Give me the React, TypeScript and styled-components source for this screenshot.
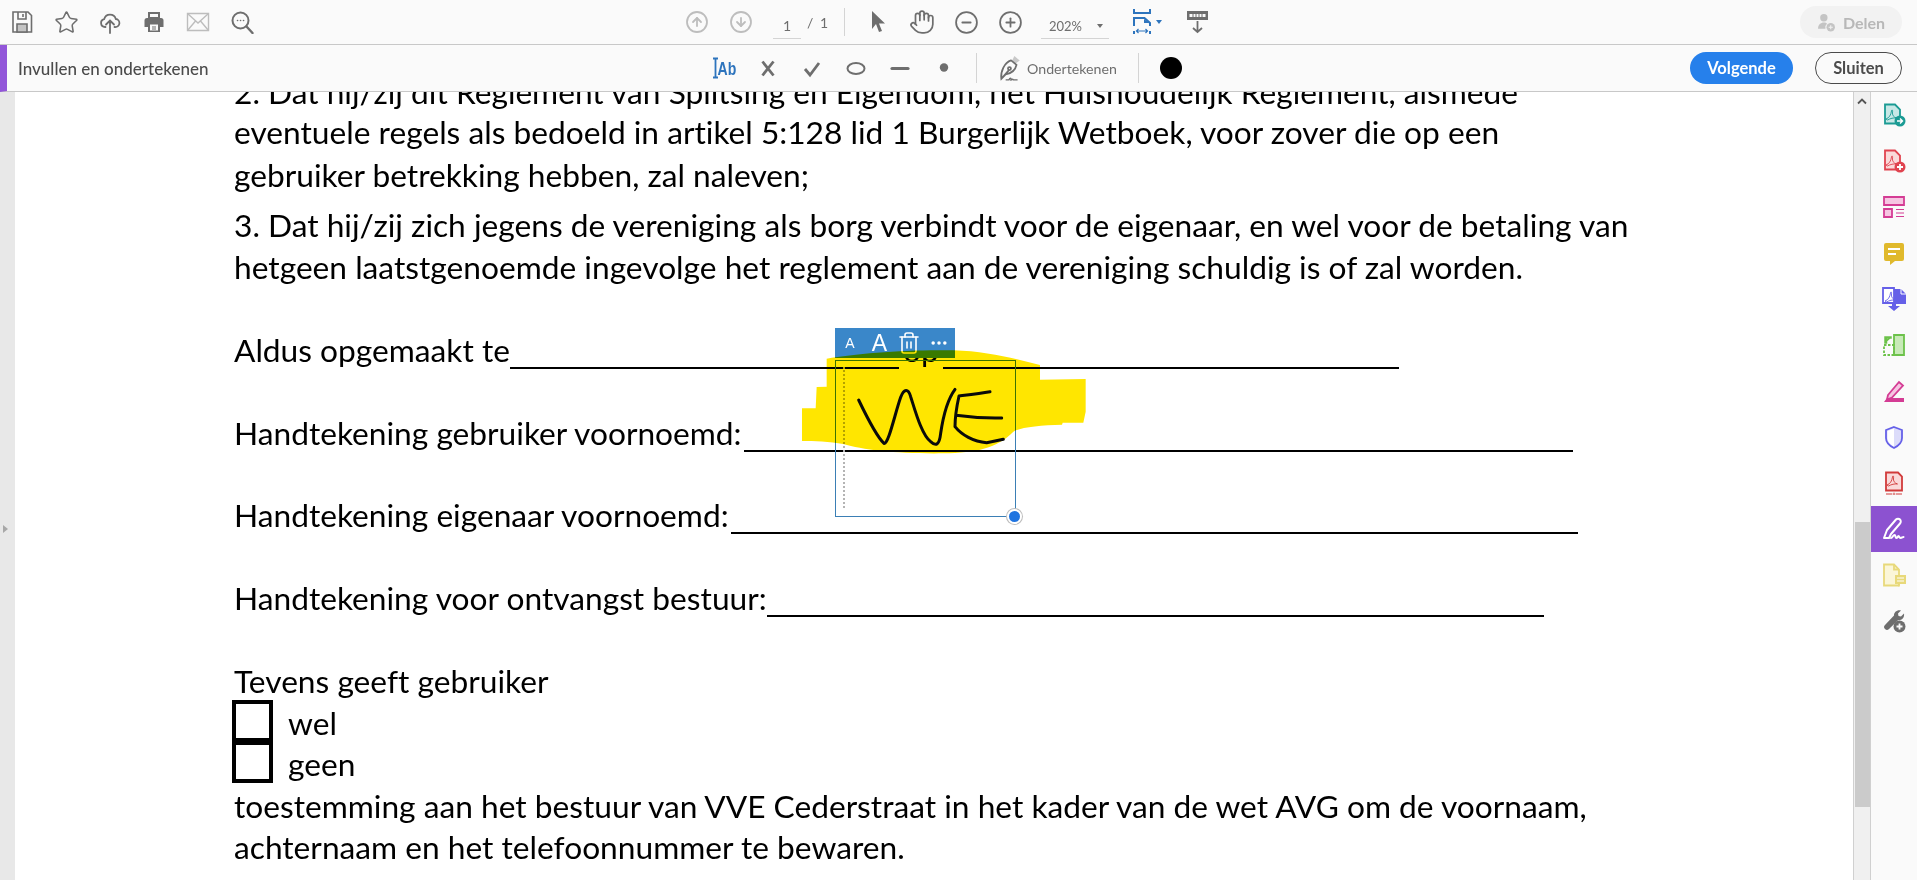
import React from 'react';
import styled, { createGlobalStyle } from 'styled-components';
import { CircleArrowDown, CircleArrowUp, CircleMinus, CirclePlus, Ellipsis, Hand, Star, Trash2 } from 'lucide-react';

const GlobalStyle = createGlobalStyle`
   html, body {
      margin: 0;
      padding: 0;
      height: 100%;
      overflow: hidden;
      background: #fff;
   }
`;

const Root = styled.div`
   display: flex;
   flex-direction: column;
   width: 1917px;
   height: 880px;
   overflow: hidden;
   font-family: 'Lato', 'Liberation Sans', sans-serif;
`;

const TopBar = styled.div`
   display: flex;
   align-items: center;
   flex: 0 0 45px;
   box-sizing: border-box;
   background: #fafafa;
   border-bottom: 1px solid #c8c8c8;
`;

const ToolGroup = styled.div<{ $width?: number }>`
   display: flex;
   align-items: center;
   flex: 0 0 ${(p) => (p.$width ? `${p.$width}px` : 'auto')};
`;

const Slot = styled.div<{ $w?: number; $ml?: number; $faded?: boolean }>`
   display: flex;
   align-items: center;
   justify-content: center;
   flex: 0 0 ${(p) => p.$w ?? 44}px;
   height: 30px;
   margin-left: ${(p) => p.$ml ?? 0}px;
   color: ${(p) => (p.$faded ? '#bdbdbd' : '#6e6e6e')};
`;

const PageField = styled.div`
   flex: 0 0 28px;
   margin-left: 10px;
   height: 33px;
   line-height: 40px;
   box-sizing: border-box;
   border-bottom: 1px solid #d4d4d4;
   text-align: center;
   font-size: 14px;
   color: #6e6e6e;
`;

const PageTotal = styled.div`
   flex: 0 0 43px;
   padding-left: 6px;
   box-sizing: border-box;
   font-size: 14px;
   word-spacing: 3px;
   color: #6e6e6e;
`;

const Divider = styled.div<{ $h?: number; $ml?: number; $mr?: number }>`
   flex: 0 0 1px;
   height: ${(p) => p.$h ?? 28}px;
   margin: 0 ${(p) => p.$mr ?? 0}px 0 ${(p) => p.$ml ?? 0}px;
   background: #d4d4d4;
`;

const ZoomField = styled.div`
   display: flex;
   align-items: center;
   flex: 0 0 68px;
   height: 33px;
   margin-left: 9px;
   box-sizing: border-box;
   border-bottom: 1px solid #d4d4d4;
   padding: 8px 0 0 8px;
   font-size: 13px;
   color: #6e6e6e;
`;

const Caret = styled.span<{ $color?: string; $ml?: number }>`
   display: inline-block;
   width: 0;
   height: 0;
   margin-left: ${(p) => p.$ml ?? 15}px;
   border-left: 3.5px solid transparent;
   border-right: 3.5px solid transparent;
   border-top: 4px solid ${(p) => p.$color ?? '#6e6e6e'};
`;

const ShareButton = styled.div`
   display: flex;
   align-items: center;
   justify-content: center;
   gap: 7px;
   flex: 0 0 102px;
   height: 32px;
   margin-left: auto;
   margin-right: 15px;
   border-radius: 16px;
   background: #f2f2f2;
   color: #b8b8b8;
   font-size: 16px;
   font-weight: 700;
`;

const FormBar = styled.div`
   display: flex;
   align-items: center;
   flex: 0 0 47px;
   box-sizing: border-box;
   background: #fafafa;
   border-bottom: 1px solid #c8c8c8;
   border-left: 7px solid #9256d9;
`;

const FormTitle = styled.div`
   flex: 0 0 695px;
   padding-left: 11px;
   box-sizing: border-box;
   font-size: 17px;
   font-weight: 500;
   color: #4b4b4b;
   white-space: nowrap;
`;

const SignLabel = styled.span`
   flex: 0 0 90px;
   margin-left: 4px;
   font-size: 14.2px;
   color: #6e6e6e;
   white-space: nowrap;
`;

const ColorDot = styled.div`
   width: 22px;
   height: 22px;
   margin-left: 21px;
   border-radius: 50%;
   background: #000;
`;

const PillButton = styled.div<{ $primary?: boolean }>`
   display: flex;
   align-items: center;
   justify-content: center;
   box-sizing: border-box;
   height: 32px;
   border-radius: 16px;
   font-size: 16.5px;
   font-weight: 700;
   color: ${(p) => (p.$primary ? '#fff' : '#4b4b4b')};
   background: ${(p) => (p.$primary ? '#2680eb' : 'transparent')};
   border: ${(p) => (p.$primary ? 'none' : '1px solid #4b4b4b')};
`;

const ActionGroup = styled.div`
   display: grid;
   grid-template-columns: 103px 87px;
   gap: 22px;
   margin-left: auto;
   margin-right: 15px;
`;

const Body = styled.div`
   display: flex;
   flex: 1;
   min-height: 0;
`;

const Gutter = styled.div`
   flex: 0 0 15px;
   background: #e8e8e8;
   padding: 433px 0 0 3px;
   box-sizing: border-box;
`;

const GutterArrow = styled.div`
   width: 0;
   height: 0;
   border-top: 4px solid transparent;
   border-bottom: 4px solid transparent;
   border-left: 5px solid #a8a8a8;
`;

const Viewer = styled.div`
   position: relative;
   flex: 1;
   overflow: hidden;
   background: #fff;
   padding: 0 0 0 219px;
`;

const Line = styled.div<{ $gap?: number }>`
   display: flex;
   align-items: flex-end;
   height: 40px;
   margin-top: ${(p) => p.$gap ?? 0}px;
   font-size: 31.7px;
   font-variant-ligatures: none;
   line-height: 40px;
   color: #000;
   white-space: nowrap;
`;

const Blank = styled.span<{ $w: number; $ml?: number }>`
   display: inline-block;
   flex: 0 0 ${(p) => p.$w}px;
   height: 30px;
   margin: 0 0 1px ${(p) => p.$ml ?? 0}px;
   border-bottom: 2px solid #000;
`;

const InlineWord = styled.span`
   margin-left: 4px;
`;

const Opt = styled.span`
   margin-left: 15px;
`;

const CheckBox = styled.span<{ $up: number }>`
   flex: 0 0 41px;
   box-sizing: border-box;
   height: 45px;
   margin: ${(p) => -p.$up}px 0 ${(p) => p.$up}px -2px;
   border: 4px solid #000;
`;

const CheckLine = styled(Line)`
   align-items: center;
`;

const MiniToolbar = styled.div`
   position: absolute;
   left: 820px;
   top: 236px;
   display: flex;
   align-items: center;
   width: 120px;
   height: 30px;
   background: #3a87c9;
   color: #fff;
`;

const MiniA = styled.span<{ $size: number; $w: number }>`
   flex: 0 0 ${(p) => p.$w}px;
   text-align: center;
   font-family: 'Liberation Sans', sans-serif;
   font-size: ${(p) => p.$size}px;
   line-height: 30px;
`;

const Drawing = styled.svg`
   position: absolute;
   left: 765px;
   top: 218px;
   width: 340px;
   height: 220px;
   overflow: visible;
`;

const Highlight = styled.path`
   fill: #ffe600;
   mix-blend-mode: multiply;
`;

const SelectionBox = styled.div`
   position: absolute;
   left: 820px;
   top: 268px;
   box-sizing: border-box;
   width: 181px;
   height: 157px;
   border: 1px solid #3b7fb5;
`;

const DottedGuide = styled.div`
   position: absolute;
   left: 7px;
   top: 6px;
   height: 141px;
   border-left: 2px dotted #b4b4b4;
`;

const Handle = styled.div`
   position: absolute;
   right: -7px;
   bottom: -8px;
   box-sizing: border-box;
   width: 15px;
   height: 15px;
   border-radius: 50%;
   background: #1f74e0;
   border: 2px solid #fff;
   box-shadow: 0 0 0 1px #bdbdbd;
`;

const ScrollTrack = styled.div`
   display: flex;
   flex-direction: column;
   align-items: center;
   flex: 0 0 18px;
   box-sizing: border-box;
   background: #f0f0f0;
   border-left: 1px solid #d0d0d0;
   border-right: 1px solid #d0d0d0;
`;

const ScrollUp = styled.div`
   display: flex;
   justify-content: center;
   height: 430px;
   padding-top: 5px;
   box-sizing: border-box;
`;

const ScrollThumb = styled.div`
   width: 15px;
   height: 285px;
   background: #cbcbcb;
`;

const Rail = styled.div`
   display: flex;
   flex-direction: column;
   flex: 0 0 46px;
   background: #fafafa;
`;

const RailItem = styled.div<{ $active?: boolean }>`
   display: flex;
   align-items: center;
   justify-content: center;
   height: 46px;
   background: ${(p) => (p.$active ? '#8c52d0' : 'transparent')};
`;

const icon = { width: 24, height: 24, viewBox: '0 0 24 24', fill: 'none' } as const;

function SaveIcon() {
   return (
      <svg {...icon} stroke="#6e6e6e" strokeWidth="1.6">
         <path d="M3 2h15l3.500 3.500V22H3z" />
         <path d="M8 2v7h8V2M13 4v3" />
         <path d="M7 14h10v8H7z" fill="#c4c4c4" />
      </svg>
   );
}

function UploadIcon() {
   return (
      <svg {...icon} stroke="#6e6e6e" strokeWidth="1.800" strokeLinecap="round">
         <path d="M7.500 17H7a4 4 0 0 1-.8-7.900A6 6 0 0 1 17.800 9 4 4 0 0 1 17 17h-.5" />
         <path d="M12 23V11M8 14.500 12 10.500l4 4" />
      </svg>
   );
}

function PrintIcon() {
   return (
      <svg {...icon}>
         <path d="M7 3h10v5H7z" stroke="#6e6e6e" strokeWidth="2" />
         <path d="M5 8h14a2.500 2.500 0 0 1 2.500 2.500V17H18v-4H6v4H2.500v-6.500A2.500 2.500 0 0 1 5 8z" fill="#6e6e6e" />
         <path d="M6 13h12v9H6z" fill="#6e6e6e" />
         <path d="M8 14.500h8v6H8z" fill="#fafafa" />
         <path d="M10 17h4M10 19h4" stroke="#6e6e6e" />
      </svg>
   );
}

function MailIcon() {
   return (
      <svg {...icon} stroke="#bdbdbd" strokeWidth="1.400">
         <path d="M1.500 3.500h21v17h-21z" />
         <path d="M1.500 3.500 12 13l10.500-9.500M1.500 20.500 9.500 11M22.500 20.500 14.500 11" />
      </svg>
   );
}

function FindIcon() {
   return (
      <svg {...icon} stroke="#6e6e6e" strokeWidth="2" strokeLinecap="round">
         <circle cx="10.500" cy="10.500" r="8" />
         <path d="M16.500 16.500l6 6.500" strokeWidth="2.400" />
         <path d="M7.500 10.500h.1M10.500 10.500h.1M13.500 10.500h.1" strokeWidth="1.600" />
      </svg>
   );
}

function CursorIcon() {
   return (
      <svg {...icon}>
         <path d="M6 1v18l4-5 3 8 3-1-3-7.500h6z" fill="#6e6e6e" />
      </svg>
   );
}

function FitWidthIcon() {
   return (
      <svg width="18" height="26" viewBox="0 0 18 26" fill="none" stroke="#2d74bd" strokeWidth="2">
         <path d="M1 0v4h16V0" />
         <path d="M1 17V9h10.500L17 14v3M1 25v-3M17 25v-3" />
         <path d="M3.500 22h11M5.500 20l-2 2 2 2M12.500 20l2 2-2 2" strokeWidth="1.200" />
         <path d="M11 10v4h5.500z" fill="#2d74bd" stroke="none" />
      </svg>
   );
}

function ReadIcon() {
   return (
      <svg width="21" height="24" viewBox="0 0 21 24" fill="none">
         <path d="M0 1h21v9H0z" fill="#6e6e6e" />
         <path d="M2.500 4h16v3h-16z" fill="#fafafa" />
         <path d="M6 4v3M9 4v3M12 4v3M15 4v3" stroke="#6e6e6e" />
         <path d="M10.500 11v11M6 18l4.500 4 4.500-4" stroke="#6e6e6e" strokeWidth="1.800" />
      </svg>
   );
}

function ShareIcon() {
   return (
      <svg width="19" height="19" viewBox="0 0 18 18">
         <circle cx="6.500" cy="4.500" r="3.500" fill="#c4c4c4" />
         <path d="M1 15c0-4 2.500-6 5.500-6 1.500 0 2.500.5 3 1a5 5 0 0 0-1.500 5z" fill="#c4c4c4" />
         <circle cx="13" cy="13.500" r="4" fill="#c4c4c4" />
         <path d="M13 11.500v4M11 13.500h4" stroke="#f2f2f2" />
      </svg>
   );
}

function TextToolIcon() {
   return (
      <svg width="24" height="24" viewBox="0 0 24 24" fill="none">
         <path d="M1 2.500h5M3.500 2.500v19M1 21.500h5" stroke="#2d74bd" strokeWidth="1.800" />
         <text
            transform="translate(5.500 19) scale(0.74 1)"
            fontFamily="Liberation Sans, sans-serif"
            fontWeight="700"
            fontSize="19"
            fill="#2d74bd"
         >
            Ab
         </text>
      </svg>
   );
}

function CrossIcon() {
   return (
      <svg {...icon} stroke="#6e6e6e" strokeWidth="2.800">
         <path d="M6.500 5.500l11 14M17.500 5.500l-11 14" />
      </svg>
   );
}

function CheckIcon() {
   return (
      <svg {...icon} stroke="#6e6e6e" strokeWidth="2.800">
         <path d="M5 13l5 6L19 7" />
      </svg>
   );
}

function EllipseIcon() {
   return (
      <svg {...icon} stroke="#6e6e6e" strokeWidth="2">
         <ellipse cx="12" cy="12.500" rx="8.500" ry="5.500" />
      </svg>
   );
}

function DashIcon() {
   return (
      <svg {...icon} stroke="#6e6e6e" strokeWidth="3.200" strokeLinecap="round">
         <path d="M4 12.500h16" />
      </svg>
   );
}

function DotIcon() {
   return (
      <svg {...icon}>
         <circle cx="12" cy="11.500" r="4.200" fill="#6e6e6e" />
      </svg>
   );
}

function SignIcon() {
   return (
      <svg width="26" height="26" viewBox="0 0 24 24" fill="none" stroke="#6e6e6e" strokeWidth="1.600">
         <path d="M16 1l5 4-4 3-3-3z" fill="#c8c8c8" stroke="none" />
         <path d="M13 5l5 4c-1 5-5 8-10 9l-4 4c-1-7 3-15 9-17zM4 22l7-8" />
         <circle cx="11.500" cy="12.500" r="1.400" />
         <path d="M8 23h3c1-2 2-2 2 0 1-1 2-1 2 0h4" strokeWidth="1.300" />
      </svg>
   );
}

function Sigil({ color, x = 0, y = 0 }: { color: string; x?: number; y?: number }) {
   return (
      <path
         transform={`translate(${x} ${y})`}
         d="M4 16c3-1 5-4 5.500-8 .2-2 1.500-1 1 1-.5 3 1 5 4 6-3-.3-6 .3-9 2z"
         fill="none"
         stroke={color}
         strokeWidth="0.900"
      />
   );
}

function CreateIcon() {
   return (
      <svg {...icon}>
         <path d="M3 1.500h10l5 5v14H3z" fill="#c8e8e6" stroke="#1b9b94" strokeWidth="1.800" />
         <Sigil color="#1b9b94" />
         <circle cx="18" cy="18" r="5.500" fill="#1b9b94" />
         <path d="M15 18h5M18 15.500l2.500 2.500-2.500 2.500" stroke="#fff" strokeWidth="1.400" fill="none" />
      </svg>
   );
}

function CombineIcon() {
   return (
      <svg {...icon}>
         <path d="M3 1.500h10l5 5v14H3z" fill="#fadada" stroke="#e0434f" strokeWidth="1.800" />
         <Sigil color="#e0434f" />
         <circle cx="18" cy="18" r="5.500" fill="#e0434f" />
         <path d="M15 18h6M18 15v6" stroke="#fff" strokeWidth="1.800" />
      </svg>
   );
}

function OrganizeIcon() {
   return (
      <svg {...icon}>
         <path d="M2 2h20v8H2z" fill="#f6c6e2" stroke="#d43c94" strokeWidth="1.800" />
         <path d="M2 14h8v8H2z" fill="#f6c6e2" stroke="#d43c94" strokeWidth="1.800" />
         <path d="M14 14.500h8M14 18h8M14 21.500h8" stroke="#d43c94" strokeWidth="1.200" />
      </svg>
   );
}

function CommentIcon() {
   return (
      <svg {...icon}>
         <path d="M4 2h16a2 2 0 0 1 2 2v14a2 2 0 0 1-2 2h-7l-5 4v-4H4a2 2 0 0 1-2-2V4a2 2 0 0 1 2-2z" fill="#e0b92c" />
         <path d="M6 8h12M6 13h8" stroke="#fff" strokeWidth="2" />
      </svg>
   );
}

function ExportIcon() {
   return (
      <svg {...icon}>
         <path d="M1 1h11v15H1z" fill="#fff" stroke="#6560e8" strokeWidth="1.800" />
         <Sigil color="#6560e8" x={-1} y={-2} />
         <path d="M12 2h7l5 5v10H12z" fill="#6560e8" />
         <path d="M19 1v6h5" stroke="#fff" />
         <path d="M10 16h4v3h4l-6 5-6-5h4z" fill="#6560e8" />
      </svg>
   );
}

function CompressIcon() {
   return (
      <svg {...icon}>
         <path d="M12 2h10v20H12z" fill="#c8eab8" stroke="#6cc24a" strokeWidth="1.800" />
         <path d="M2 12h10v10H2z" fill="none" stroke="#6cc24a" strokeWidth="1.800" strokeDasharray="2.500 1.500" />
         <path d="M9 4L4 8.500M3 4h6v1H4.500v5H3z" stroke="#6cc24a" strokeWidth="1.500" fill="#6cc24a" />
      </svg>
   );
}

function RedactIcon() {
   return (
      <svg {...icon}>
         <path d="M2 23l3-4h17v4z" fill="#d43c94" />
         <path d="M6 16L17 3l4 3.500-11 12-5 2z" fill="#f6c6e2" stroke="#d43c94" strokeWidth="1.800" />
      </svg>
   );
}

function ShieldIcon() {
   return (
      <svg {...icon}>
         <path d="M12 2l8 3v8c0 5-4 8-8 10-4-2-8-5-8-10V5z" fill="#dcdcfa" stroke="#6560e8" strokeWidth="1.800" />
         <path d="M12 3.500c-3 1-5 2-6.500 2.500v7c0 4 3 6.500 6.500 8.500z" fill="#fff" />
      </svg>
   );
}

function PdfStampIcon() {
   return (
      <svg {...icon}>
         <path d="M4 1.500h12l4 4v14H4z" fill="#fadada" stroke="#d13a3a" strokeWidth="1.800" />
         <Sigil color="#d13a3a" x={1} y={-2} />
         <path d="M4 23h6M14 23h6" stroke="#d13a3a" strokeWidth="1" />
         <circle cx="12" cy="23" r="1" fill="none" stroke="#d13a3a" strokeWidth="0.700" />
      </svg>
   );
}

function FillSignIcon() {
   return (
      <svg {...icon} fill="none" stroke="#fff" strokeWidth="2" strokeLinejoin="round" strokeLinecap="round">
         <path d="M2 21l3-8L14 2.500c1-1 3-1 4 0s1 3 0 4L9 17l-2 4z" />
         <path d="M9 21c1.500 0 2-3 3.500-3s.5 3 2 3 1-2 2-2 .5 2 2 2 2-1 3-1" />
      </svg>
   );
}

function NoteIcon() {
   return (
      <svg {...icon}>
         <path d="M2 1.500h10l5 5v16H2z" fill="#fbf6d8" stroke="#e8d97a" strokeWidth="1.800" />
         <path d="M12 1.500v5h5" stroke="#e8d97a" strokeWidth="1.800" fill="none" />
         <path d="M13 12h11v9h-6l-2 3v-3h-3z" fill="#e8d97a" />
         <path d="M15 15h7M15 18h7" stroke="#fff" />
      </svg>
   );
}

function MoreToolsIcon() {
   return (
      <svg {...icon}>
         <path
            d="M19 1.500l-3 3 .5 2.500 2.500.5 3-3c.5 3-1 6-4 6.500l-2 .2L7 20a2.800 2.800 0 1 1-4-4l9-9.500c-.2-3 3-6 7-5z"
            fill="#6e6e6e"
         />
         <circle cx="17.500" cy="17.500" r="6" fill="#6e6e6e" />
         <path d="M14.500 17.500h6M17.500 14.500v6" stroke="#fafafa" strokeWidth="1.800" />
      </svg>
   );
}

const railIcons = [
   CreateIcon,
   CombineIcon,
   OrganizeIcon,
   CommentIcon,
   ExportIcon,
   CompressIcon,
   RedactIcon,
   ShieldIcon,
   PdfStampIcon,
   FillSignIcon,
   NoteIcon,
   MoreToolsIcon,
];

export default function App() {
   return (
      <Root>
         <GlobalStyle />
         <TopBar>
            <ToolGroup $width={675}>
               <Slot>
                  <SaveIcon />
               </Slot>
               <Slot>
                  <Star size={25} strokeWidth={1.5} />
               </Slot>
               <Slot>
                  <UploadIcon />
               </Slot>
               <Slot>
                  <PrintIcon />
               </Slot>
               <Slot>
                  <MailIcon />
               </Slot>
               <Slot>
                  <FindIcon />
               </Slot>
            </ToolGroup>
            <ToolGroup>
               <Slot $faded>
                  <CircleArrowUp size={24} strokeWidth={1.8} />
               </Slot>
               <Slot $faded>
                  <CircleArrowDown size={24} strokeWidth={1.8} />
               </Slot>
               <PageField>1</PageField>
               <PageTotal>/ 1</PageTotal>
               <Divider />
               <Slot $ml={11}>
                  <CursorIcon />
               </Slot>
               <Slot>
                  <Hand size={26} strokeWidth={1.6} />
               </Slot>
               <Slot>
                  <CircleMinus size={25} strokeWidth={1.7} />
               </Slot>
               <Slot>
                  <CirclePlus size={25} strokeWidth={1.7} />
               </Slot>
               <ZoomField>
                  202%
                  <Caret />
               </ZoomField>
               <Slot $w={76}>
                  <FitWidthIcon />
                  <Caret $color="#2d74bd" $ml={5} />
               </Slot>
               <Slot $w={25}>
                  <ReadIcon />
               </Slot>
            </ToolGroup>
            <ShareButton>
               <ShareIcon />
               Delen
            </ShareButton>
         </TopBar>
         <FormBar>
            <FormTitle>Invullen en ondertekenen</FormTitle>
            <ToolGroup>
               <Slot>
                  <TextToolIcon />
               </Slot>
               <Slot>
                  <CrossIcon />
               </Slot>
               <Slot>
                  <CheckIcon />
               </Slot>
               <Slot>
                  <EllipseIcon />
               </Slot>
               <Slot>
                  <DashIcon />
               </Slot>
               <Slot>
                  <DotIcon />
               </Slot>
               <Divider $h={30} $ml={10} />
               <Slot $w={24} $ml={20}>
                  <SignIcon />
               </Slot>
               <SignLabel>Ondertekenen</SignLabel>
               <Divider $h={30} $ml={21} />
               <ColorDot />
            </ToolGroup>
            <ActionGroup>
               <PillButton $primary>Volgende</PillButton>
               <PillButton>Sluiten</PillButton>
            </ActionGroup>
         </FormBar>
         <Body>
            <Gutter>
               <GutterArrow />
            </Gutter>
            <Viewer>
               <Line $gap={-20}>2. Dat hij/zij dit Reglement van Splitsing en Eigendom, het Huishoudelijk Reglement, alsmede</Line>
               <Line>eventuele regels als bedoeld in artikel 5:128 lid 1 Burgerlijk Wetboek, voor zover die op een</Line>
               <Line $gap={3}>gebruiker betrekking hebben, zal naleven;</Line>
               <Line $gap={10}>3. Dat hij/zij zich jegens de vereniging als borg verbindt voor de eigenaar, en wel voor de betaling van</Line>
               <Line $gap={2}>hetgeen laatstgenoemde ingevolge het reglement aan de vereniging schuldig is of zal worden.</Line>
               <Line $gap={43}>
                  Aldus opgemaakt te
                  <Blank $w={389} />
                  <InlineWord>op</InlineWord>
                  <Blank $w={456} $ml={4} />
               </Line>
               <Line $gap={43}>
                  Handtekening gebruiker voornoemd:
                  <Blank $w={829} $ml={2} />
               </Line>
               <Line $gap={42}>
                  Handtekening eigenaar voornoemd:
                  <Blank $w={847} $ml={2} />
               </Line>
               <Line $gap={43}>
                  Handtekening voor ontvangst bestuur:
                  <Blank $w={777} />
               </Line>
               <Line $gap={43}>Tevens geeft gebruiker</Line>
               <CheckLine $gap={2}>
                  <CheckBox $up={1} />
                  <Opt>wel</Opt>
               </CheckLine>
               <CheckLine $gap={1}>
                  <CheckBox $up={4} />
                  <Opt>geen</Opt>
               </CheckLine>
               <Line $gap={2}>toestemming aan het bestuur van VVE Cederstraat in het kader van de wet AVG om de voornaam,</Line>
               <Line $gap={1}>achternaam en het telefoonnummer te bewaren.</Line>

               <MiniToolbar>
                  <MiniA $size={14} $w={30}>A</MiniA>
                  <MiniA $size={23} $w={29}>A</MiniA>
                  <Slot $w={30}>
                     <Trash2 size={24} color="#fff" strokeWidth={1.6} />
                  </Slot>
                  <Slot $w={29}>
                     <Ellipsis size={20} color="#fff" strokeWidth={2.2} />
                  </Slot>
               </MiniToolbar>
               <SelectionBox>
                  <DottedGuide />
                  <Handle />
               </SelectionBox>
               <Drawing viewBox="0 0 1020 660">
                  <Highlight d="M140 146 C 230 130 380 118 520 121 C 620 124 700 145 780 165 L780 209 L917 207 L917 305 L910 338 L848 338 L846 344 C 780 345 720 352 700 365 C 650 415 590 428 490 430 C 360 432 250 420 190 402 C 150 395 100 393 66 393 L66 295 L107 295 L110 231 L140 230 Z" />
                  <path
                     d="M236 270 C 260 320 290 380 312 400 C 325 405 345 310 362 262 C 372 235 385 235 392 260 C 405 300 425 375 452 395 C 468 410 478 405 482 370 C 490 315 505 265 525 238 M630 245 C 600 250 560 255 537 258 C 530 290 525 330 525 350 C 545 375 580 395 620 398 L670 388 M528 316 C 570 322 620 325 665 324"
                     fill="none"
                     stroke="#0a0a0a"
                     strokeWidth="9"
                     strokeLinecap="round"
                     strokeLinejoin="round"
                  />
               </Drawing>
            </Viewer>
            <ScrollTrack>
               <ScrollUp>
                  <svg width="10" height="8" viewBox="0 0 10 8" fill="none" stroke="#555" strokeWidth="1.800">
                     <path d="M1 6.500 5 2.500 9 6.500" />
                  </svg>
               </ScrollUp>
               <ScrollThumb />
            </ScrollTrack>
            <Rail>
               {railIcons.map((RailIcon, i) => (
                  <RailItem key={i} $active={RailIcon === FillSignIcon}>
                     <RailIcon />
                  </RailItem>
               ))}
            </Rail>
         </Body>
      </Root>
   );
}
